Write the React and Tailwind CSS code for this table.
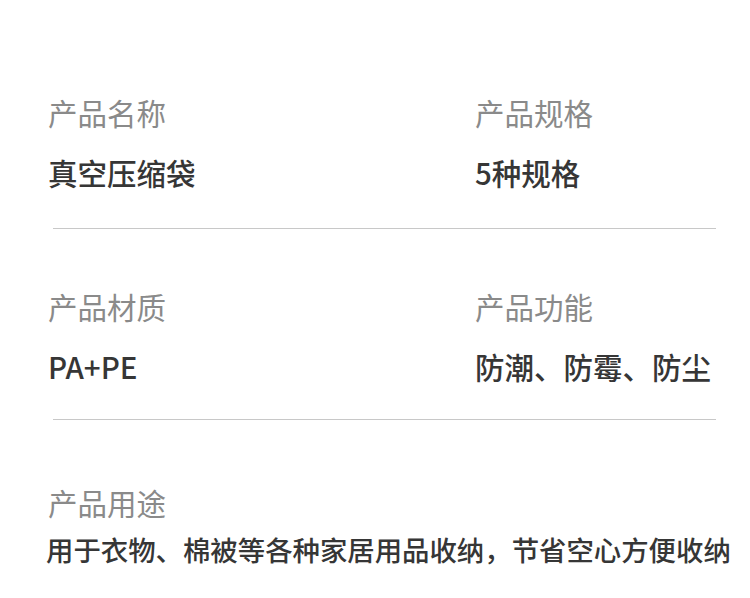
export default function App() {
  const rows = [
    [
      { label: "产品名称", value: "真空压缩袋" },
      { label: "产品规格", value: "5种规格" },
    ],
    [
      { label: "产品材质", value: "PA+PE" },
      { label: "产品功能", value: "防潮、防霉、防尘" },
    ],
  ];

  return (
    <div
      className="w-[750px] h-[598px] bg-white overflow-hidden"
      style={{ fontFamily: '"Noto Sans CJK SC", "Noto Sans", sans-serif' }}
    >
      <div className="pt-[97px]">
        {rows.map((row, i) => (
          <div key={i}>
            <div className="flex pl-[48px]">
              {row.map((item, j) => (
                <div
                  key={item.label}
                  className={j === 0 ? "w-[427px] shrink-0" : "flex-1"}
                >
                  <p className="text-[29.5px] leading-[30px] text-[#8a8a8a]">
                    {item.label}
                  </p>
                  <p className="mt-[30px] text-[29.5px] leading-[30px] font-medium text-[#363636] whitespace-nowrap">
                    {item.value}
                  </p>
                </div>
              ))}
            </div>
            <div
              className={
                i === 0
                  ? "ml-[53px] w-[663px] h-px bg-[#c8c8c8] mt-[41px] mb-[62px]"
                  : "ml-[53px] w-[663px] h-px bg-[#c8c8c8] mt-[38px] mb-[67px]"
              }
            />
          </div>
        ))}
        <div className="pl-[46px]">
          <p className="pl-[2px] text-[29.5px] leading-[30px] text-[#8a8a8a]">
            产品用途
          </p>
          <p className="mt-[18px] text-[27.4px] leading-[28px] font-medium text-[#363636] whitespace-nowrap">
            用于衣物、棉被等各种家居用品收纳，节省空心方便收纳
          </p>
        </div>
      </div>
    </div>
  );
}
